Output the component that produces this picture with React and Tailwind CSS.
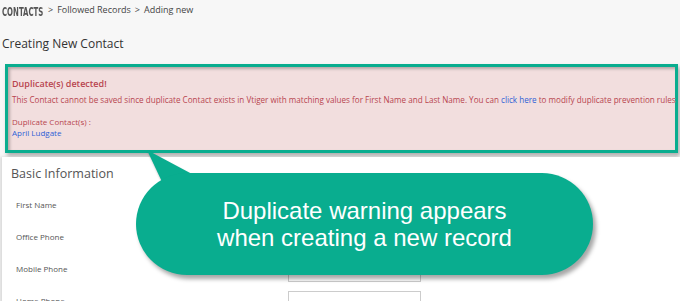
import React from "react";

const openSans = { fontFamily: '"Open Sans", "Noto Sans", sans-serif' };

const rows = ["First Name", "Office Phone", "Mobile Phone", "Home Phone"];

const Crumbs = () => {
  return (
    <div className="shrink-0 h-[20px] flex items-center pl-[2px] text-[#444]" style={openSans}>
      <span className="inline-block w-[42px] overflow-visible">
        <span
          className="inline-block origin-left scale-x-[0.62] text-[12.5px] leading-[12px] font-bold text-[#555]"
          style={{ fontFamily: '"DejaVu Sans Condensed", "DejaVu Sans", sans-serif' }}
        >
          CONTACTS
        </span>
      </span>
      <span className="text-[9px] ml-[4px] mr-[4px]">&gt;</span>
      <span className="text-[9px]">Followed Records</span>
      <span className="text-[9px] ml-[4px] mr-[4px]">&gt;</span>
      <span className="text-[9px]">Adding new</span>
    </div>
  );
};

const DuplicateAlert = () => {
  return (
    <div className="shrink-0 ml-[5px] mr-[2px] mt-[12px] h-[89px] border-[3px] border-[#09ad8f] shadow-[2px_3px_4px_rgba(0,0,0,0.3)]">
      <div
        className="h-full bg-[#f2dede] text-[#b8454f] pl-[4px] pt-[11px] shadow-[inset_2px_2px_3px_rgba(0,0,0,0.25)]"
        style={openSans}
      >
        <div className="text-[9px] leading-[12px] font-semibold">Duplicate(s) detected!</div>
        <div className="text-[8.1px] leading-[12px] mt-[4px] whitespace-nowrap">
          This Contact cannot be saved since duplicate Contact exists in Vtiger with matching values for First Name and Last Name. You can{" "}
          <span className="text-[#2f5fd6]">click here</span> to modify duplicate prevention rules
        </div>
        <div className="text-[8px] leading-[11px] mt-[10px]">Duplicate Contact(s) :</div>
        <div className="text-[8px] leading-[11px] text-[#2f5fd6]">April Ludgate</div>
      </div>
    </div>
  );
};

const BasicInfo = () => {
  return (
    <div className="shrink-0 mt-[4px] ml-[2px] h-[200px] bg-white shadow-[-2px_0_3px_rgba(0,0,0,0.12)] pt-[9px]" style={openSans}>
      <div className="pl-[9px] text-[12.5px] leading-[16px] text-[#555]">Basic Information</div>
      <div className="mt-[7px]">
        {rows.map((r) => (
          <div key={r} className="h-[32px] flex items-start">
            <div className="w-[286px] pl-[14px] pt-[10px] text-[8px] leading-[12px] text-[#555]">{r}</div>
            <div className="mt-[6px] w-[133px] h-[23px] border border-[#cccccc] bg-white" />
          </div>
        ))}
      </div>
    </div>
  );
};

const Callout = () => {
  return (
    <>
      <svg
        className="absolute left-[140px] top-[148px] drop-shadow-[1px_2px_1px_rgba(0,0,0,0.3)]"
        width="60"
        height="40"
        viewBox="0 0 60 40"
      >
        <polygon points="7,2 24,38 52,26" fill="#09ad8f" />
      </svg>
      <div
        className="absolute left-[136px] top-[173px] w-[457px] h-[102px] rounded-full bg-[#09ad8f] shadow-[3px_4px_4px_rgba(0,0,0,0.35)] flex flex-col items-center justify-center text-white text-[24px] leading-[27px]"
        style={{ fontFamily: '"Liberation Sans", Arial, sans-serif' }}
      >
        <div>Duplicate warning appears</div>
        <div>when creating a new record</div>
      </div>
    </>
  );
};

export default function App() {
  return (
    <div className="relative w-[680px] h-[301px] overflow-hidden bg-[#f7f7f7] flex flex-col">
      <Crumbs />
      <div className="shrink-0 mt-[16px] pl-[2px] text-[12px] leading-[16px] text-[#333]" style={openSans}>
        Creating New Contact
      </div>
      <DuplicateAlert />
      <BasicInfo />
      <Callout />
    </div>
  );
}
